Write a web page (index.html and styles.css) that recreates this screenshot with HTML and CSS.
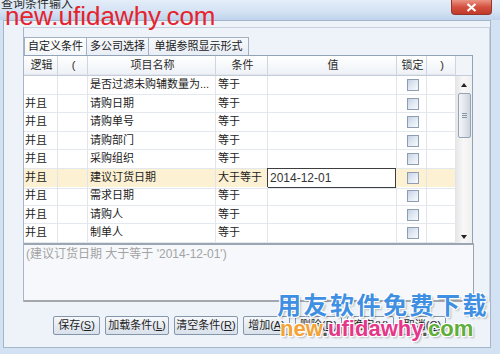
FILE: index.html
```html
<!DOCTYPE html>
<html lang="zh-CN">
<head>
    <meta charset="UTF-8">
    <title>查询条件输入</title>
    <link rel="stylesheet" href="styles.css">
</head>
<body>
    <div class="window">
        <div class="titlebar">
            <span class="title">查询条件输入</span>
            <span class="close">
                <svg width="11" height="9" viewBox="0 0 11 9"><path d="M1.5 1 L9.5 8 M9.5 1 L1.5 8" stroke="#fff" stroke-width="2.2" fill="none"/></svg>
            </span>
        </div>
        <div class="client">
            <div class="pane">
                <div class="tabs">
                    <span class="tab t1 active">自定义条件</span>
                    <span class="tab t2">多公司选择</span>
                    <span class="tab t3">单据参照显示形式</span>
                </div>
                <div class="grid">
                    <div class="row head">
                        <span class="cell">逻辑</span>
                        <span class="cell">(</span>
                        <span class="cell">项目名称</span>
                        <span class="cell">条件</span>
                        <span class="cell">值</span>
                        <span class="cell">锁定</span>
                        <span class="cell">)</span>
                        <span class="corner"></span>
                    </div>
                    <div class="body">
                        <div class="rows">
                            <div class="row">
                                <span class="cell"></span><span class="cell"></span>
                                <span class="cell">是否过滤未购辅数量为...</span><span class="cell">等于</span>
                                <span class="cell"></span><span class="cell"><i class="chk"></i></span><span class="cell"></span>
                            </div>
                            <div class="row">
                                <span class="cell">并且</span><span class="cell"></span>
                                <span class="cell">请购日期</span><span class="cell">等于</span>
                                <span class="cell"></span><span class="cell"><i class="chk"></i></span><span class="cell"></span>
                            </div>
                            <div class="row">
                                <span class="cell">并且</span><span class="cell"></span>
                                <span class="cell">请购单号</span><span class="cell">等于</span>
                                <span class="cell"></span><span class="cell"><i class="chk"></i></span><span class="cell"></span>
                            </div>
                            <div class="row">
                                <span class="cell">并且</span><span class="cell"></span>
                                <span class="cell">请购部门</span><span class="cell">等于</span>
                                <span class="cell"></span><span class="cell"><i class="chk"></i></span><span class="cell"></span>
                            </div>
                            <div class="row">
                                <span class="cell">并且</span><span class="cell"></span>
                                <span class="cell">采购组织</span><span class="cell">等于</span>
                                <span class="cell"></span><span class="cell"><i class="chk"></i></span><span class="cell"></span>
                            </div>
                            <div class="row current">
                                <span class="cell">并且</span><span class="cell"></span>
                                <span class="cell">建议订货日期</span><span class="cell">大于等于</span>
                                <span class="cell"><span class="editor">2014-12-01</span></span><span class="cell"><i class="chk"></i></span><span class="cell"></span>
                            </div>
                            <div class="row">
                                <span class="cell">并且</span><span class="cell"></span>
                                <span class="cell">需求日期</span><span class="cell">等于</span>
                                <span class="cell"></span><span class="cell"><i class="chk"></i></span><span class="cell"></span>
                            </div>
                            <div class="row">
                                <span class="cell">并且</span><span class="cell"></span>
                                <span class="cell">请购人</span><span class="cell">等于</span>
                                <span class="cell"></span><span class="cell"><i class="chk"></i></span><span class="cell"></span>
                            </div>
                            <div class="row">
                                <span class="cell">并且</span><span class="cell"></span>
                                <span class="cell">制单人</span><span class="cell">等于</span>
                                <span class="cell"></span><span class="cell"><i class="chk"></i></span><span class="cell"></span>
                            </div>
                        </div>
                        <div class="scrollbar">
                            <span class="arrow-up"></span>
                            <span class="thumb"><i></i><i></i><i></i></span>
                            <span class="arrow-down"></span>
                        </div>
                    </div>
                </div>
                <div class="summary">(建议订货日期 大于等于 '2014-12-01')</div>
            </div>
            <div class="buttons">
                <span class="btn">保存(<u>S</u>)</span>
                <span class="btn wide">加载条件(<u>L</u>)</span>
                <span class="btn wide">清空条件(<u>R</u>)</span>
                <span class="btn">增加(<u>A</u>)</span>
                <span class="btn">删除(<u>D</u>)</span>
                <span class="btn">确定(<u>Y</u>)</span>
                <span class="btn">取消(<u>C</u>)</span>
            </div>
        </div>

        <div class="mark-top">new.ufidawhy.com</div>
        <div class="mark-cn">用友软件免费下载</div>
        <div class="mark-url"><span class="orange">new</span><span class="dot">.</span><span class="pink">ufidawhy</span><span class="dot">.</span><span class="green">com</span></div>
    </div>
</body>
</html>
```

FILE: styles.css
```css
* {
    box-sizing: border-box;
}

body {
    margin: 0;
    font: 11px/18px "Liberation Sans", "Noto Sans CJK SC", sans-serif;
    color: #1c1c1c;
}

.window {
    position: relative;
    width: 500px;
    height: 354px;
    display: flex;
    flex-direction: column;
    background: #d3e2f3;
    overflow: hidden;
}

/* title bar */
.titlebar {
    flex: none;
    height: 20px;
    display: flex;
    align-items: flex-start;
    background: linear-gradient(#e4edf8, #d3e2f3 60%, #bed3ec);
}

.title {
    margin: -3px 0 0 1px;
    font-size: 12px;
    line-height: 14px;
    color: #2d2d2d;
}

.close {
    margin-left: auto;
    margin-right: 8px;
    width: 41px;
    height: 15px;
    display: flex;
    align-items: center;
    justify-content: center;
    border: 1px solid #93362b;
    border-top: none;
    border-radius: 0 0 4px 4px;
    background: linear-gradient(#ea9585, #d4503f 50%, #c13a2a);
}

/* client area */
.client {
    flex: 1;
    margin: 0 9px 6px 3px;
    border: 1px solid #a5b6ca;
    background: #eef3f9;
}

.pane {
    margin: 6px 0 0 19px;
    border-top: 1px solid #c6d1dd;
    border-left: 1px solid #a7b5c6;
    border-right: 1px solid #c6d1dd;
}

.tabs {
    display: flex;
    margin-top: 9px;
    height: 18px;
}

.tab {
    height: 18px;
    margin-right: -1px;
    border: 1px solid #a2b1c4;
    border-bottom: none;
    text-align: center;
    line-height: 17px;
    background: linear-gradient(#f6f8fb, #e9eef5);
    color: #202020;
}

.tab.active {
    background: linear-gradient(#ffffff, #f3f6fa);
}

.t1 { width: 63px; }
.t2 { width: 63px; }
.t3 { width: 101px; }

/* grid */
.grid {
    width: 449px;
    border-top: 1px solid #93a3b7;
    border-right: 1px solid #93a3b7;
    background: #fff;
}

.row {
    display: grid;
    grid-template-columns: 34px 30px 128px 52px 129px 30px 29px;
    height: 18.5px;
}

.head {
    grid-template-columns: 34px 30px 128px 52px 129px 30px 29px 16px;
    height: 20px;
    background: linear-gradient(#ffffff, #edf1f6);
    border-bottom: 1px solid #c3ccd8;
}

.head .cell {
    text-align: center;
    line-height: 19px;
    color: #2a2a2a;
    border-right-color: #cdd5df;
}

.corner {
    background: #f1f4f8;
}

.cell {
    border-right: 1px solid #e0e5ec;
    border-bottom: 1px solid #e3e8ee;
    padding-left: 2px;
    line-height: 17.5px;
    white-space: nowrap;
    overflow: hidden;
}

.rows .row .cell:first-child {
    padding-left: 1px;
}

.current {
    background: #fdf1d3;
}

.editor {
    display: block;
    margin: -1px 0 0 -3px;
    height: 20px;
    border: 1px solid #3e3e3e;
    background: #fff;
    padding-left: 2px;
    font-size: 12px;
    line-height: 18px;
    color: #333;
}

.current .cell:nth-child(5) {
    overflow: visible;
    border-right-color: transparent;
}

.chk {
    display: block;
    width: 12px;
    height: 12px;
    margin: 3px auto 0;
    border: 1px solid #8f9db2;
    background: linear-gradient(135deg, #c6d3e5, #e6edf6 60%, #f7f9fc);
}

.body {
    display: flex;
}

.rows {
    width: 432px;
}

.scrollbar {
    width: 16px;
    display: flex;
    flex-direction: column;
    align-items: center;
    background: linear-gradient(to right, #e7e7e7, #f7f7f7 45%, #f0f0f0);
}

.arrow-up {
    margin-top: 7px;
    border-left: 3.5px solid transparent;
    border-right: 3.5px solid transparent;
    border-bottom: 4px solid #222;
}

.arrow-down {
    margin-top: auto;
    margin-bottom: 4px;
    border-left: 3.5px solid transparent;
    border-right: 3.5px solid transparent;
    border-top: 4px solid #222;
}

.thumb {
    margin-top: 6px;
    width: 13px;
    height: 45px;
    border: 1px solid #96a3b4;
    border-radius: 2px;
    background: linear-gradient(to right, #f4f6f9, #e2e7ed 50%, #cdd4dd);
    display: flex;
    flex-direction: column;
    align-items: center;
    justify-content: center;
    gap: 1px;
}

.thumb i {
    width: 5px;
    height: 1px;
    background: #8a96a6;
}

.summary {
    width: 450px;
    height: 59px;
    border-top: 2px solid #9ca6b2;
    border-bottom: 2px solid #a4a8ad;
    border-right: 1px solid #9ca6b2;
    background: #f6f8fb;
    padding: 1px 2px;
    font-size: 12px;
    line-height: 16px;
    color: #a3a3a3;
}

/* buttons */
.buttons {
    display: flex;
    gap: 5px;
    margin: 14px 0 0 49px;
}

.btn {
    width: 47px;
    height: 19px;
    border: 1px solid #8496ac;
    border-radius: 2px;
    background: linear-gradient(#f7f9fb, #e6ebf2 50%, #d9e1eb);
    text-align: center;
    line-height: 17px;
    color: #1e1e1e;
}

.btn.wide {
    width: 64px;
}

/* watermarks over the screenshot */
.mark-top {
    position: absolute;
    left: 5px;
    top: 3px;
    font: 26px/26px "Liberation Sans", sans-serif;
    color: #e5232d;
}

.mark-cn {
    position: absolute;
    left: 277px;
    top: 292px;
    font: 700 24px/24px "Noto Sans CJK SC", sans-serif;
    letter-spacing: 2.5px;
    color: #3f8fe2;
    text-shadow: 1px 1px 0 #fff, -1px -1px 0 #fff, 1px -1px 0 #fff, -1px 1px 0 #fff, 2px 2px 2px rgba(0, 0, 0, 0.25);
}

.mark-url {
    position: absolute;
    left: 280px;
    top: 318px;
    font: 700 22px/22px "Liberation Sans", sans-serif;
    text-shadow: 1px 1px 0 #fff, -1px -1px 0 #fff, 1px -1px 0 #fff, -1px 1px 0 #fff, 2px 2px 2px rgba(0, 0, 0, 0.25);
}

.orange { color: #f4a235; }
.pink { color: #e6368a; }
.green { color: #5fae3c; }
.dot { color: #555; }
```
